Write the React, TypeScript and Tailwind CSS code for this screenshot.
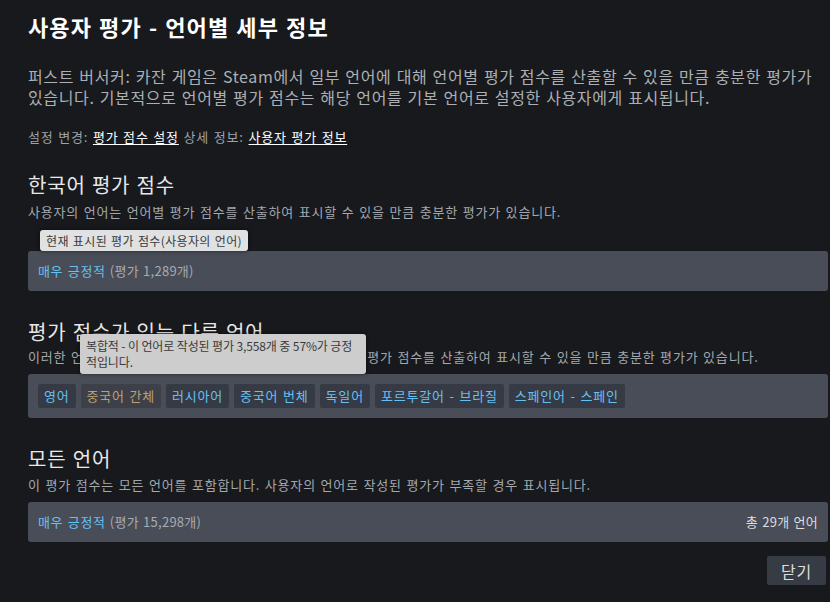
import React from 'react';

const font = 'font-["Noto_Sans_CJK_KR","Noto_Sans",sans-serif]';

type Lang = { name: string; mixed?: boolean };

const languages: Lang[] = [
  { name: '영어' },
  { name: '중국어 간체', mixed: true },
  { name: '러시아어' },
  { name: '중국어 번체' },
  { name: '독일어' },
  { name: '포르투갈어 - 브라질' },
  { name: '스페인어 - 스페인' },
];

function Tooltip({ children, className }: { children: React.ReactNode; className: string }) {
  return (
    <div
      className={`absolute z-10 rounded-[3px] px-[6px] text-[12px] text-[#3a3a3a] shadow-[0_0_4px_rgba(0,0,0,0.5)] ${className}`}
    >
      {children}
    </div>
  );
}

function ScoreBar({ count, right }: { count: string; right?: string }) {
  return (
    <div className="flex h-[40px] items-center justify-between rounded-[3px] bg-[#494d57] px-[10px] text-[13px] tracking-[0.02em]">
      <div>
        <span className="tracking-[0.05em] text-[#66c0f4]">매우 긍정적</span>
        <span className="text-[#a7abb1]"> (평가 {count}개)</span>
      </div>
      {right && <span className="text-[#dcdedf]">{right}</span>}
    </div>
  );
}

export default function App() {
  return (
    <div className={`flex h-[602px] w-[830px] overflow-hidden bg-[#17191d] ${font} tracking-[0.05em] [word-spacing:1px]`}>
      <div className="ml-[3px] flex-1 overflow-hidden bg-[radial-gradient(circle_at_top_left,rgba(74,81,92,0.4)_0%,rgba(75,81,92,0)_60%),#23262c] pl-[25px]">
        <div className="w-[800px]">
          <h1 className="pt-[13px] text-[22px] font-bold leading-[26px] tracking-[0.05em] text-white">
            사용자 평가 - 언어별 세부 정보
          </h1>

          <p className="mt-[27px] text-[16px] leading-[21px] tracking-[0.04em] text-[#acb0b5]">
            퍼스트 버서커: 카잔 게임은 Steam에서 일부 언어에 대해 언어별 평가 점수를 산출할 수 있을 만큼 충분한 평가가
            있습니다. 기본적으로 언어별 평가 점수는 해당 언어를 기본 언어로 설정한 사용자에게 표시됩니다.
          </p>

          <div className="mt-[20px] text-[13px] leading-[18px] text-[#9ea3a9]">
            설정 변경: <span className="text-white underline underline-offset-2">평가 점수 설정</span> 상세 정보:{' '}
            <span className="text-white underline underline-offset-2">사용자 평가 정보</span>
          </div>

          {/* 한국어 */}
          <h2 className="mt-[26px] text-[20px] leading-[26px] text-[#e8e8e8]">한국어 평가 점수</h2>
          <div className="mt-[5px] text-[13px] leading-[18px] text-[#a3a8ae]">
            사용자의 언어는 언어별 평가 점수를 산출하여 표시할 수 있을 만큼 충분한 평가가 있습니다.
          </div>
          <div className="relative mt-[30px]">
            <Tooltip className="left-[12px] top-[-21px] flex h-[21px] items-center bg-[#dfe1e2] tracking-[0.03em]">
              현재 표시된 평가 점수(사용자의 언어)
            </Tooltip>
            <ScoreBar count="1,289" />
          </div>

          {/* 다른 언어 */}
          <div className="relative">
            <h2 className="mt-[28px] text-[20px] leading-[26px] text-[#e8e8e8]">평가 점수가 있는 다른 언어</h2>
            <div className="mt-[3px] text-[13px] leading-[18px] text-[#a3a8ae]">
              이러한 언어에는 사용자의 언어와 관계없이 각각의 언어별 평가 점수를 산출하여 표시할 수 있을 만큼 충분한 평가가 있습니다.
            </div>
            <Tooltip className="left-[52px] top-[15px] w-[286px] whitespace-nowrap bg-[#cdcdcd] py-[4px] leading-[16px] tracking-[-0.01em] [word-spacing:0px]">
              복합적 - 이 언어로 작성된 평가 3,558개 중 57%가 긍정
              <br />
              적입니다.
            </Tooltip>
          </div>
          <div className="mt-[8px] flex h-[44px] items-center gap-[5px] rounded-[3px] bg-[#494d57] px-[10px]">
            {languages.map((l) => (
              <span
                key={l.name}
                className={`flex h-[24px] items-center rounded-[2px] px-[6px] text-[13px] ${
                  l.mixed ? 'bg-[#3d4048] text-[#b9a074]' : 'bg-[#363a44] text-[#66c0f4]'
                }`}
              >
                {l.name}
              </span>
            ))}
          </div>

          {/* 모든 언어 */}
          <h2 className="mt-[28px] text-[20px] leading-[26px] text-[#e8e8e8]">모든 언어</h2>
          <div className="mt-[4px] text-[13px] leading-[18px] text-[#a3a8ae]">
            이 평가 점수는 모든 언어를 포함합니다. 사용자의 언어로 작성된 평가가 부족할 경우 표시됩니다.
          </div>
          <div className="mt-[8px]">
            <ScoreBar count="15,298" right="총 29개 언어" />
          </div>

          <div className="mt-[14px] flex justify-end pr-[2px]">
            <button className="h-[29px] w-[59px] rounded-[2px] bg-[#373b44] text-[16px] text-[#dcdedf]">닫기</button>
          </div>
        </div>
      </div>
    </div>
  );
}
